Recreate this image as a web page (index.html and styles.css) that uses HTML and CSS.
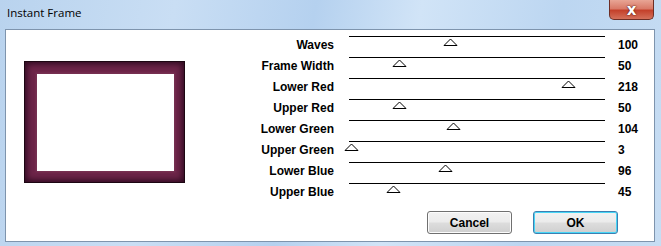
FILE: index.html
```html
<!DOCTYPE html>
<html lang="en">
<head>
  <meta charset="UTF-8" />
  <title>Instant Frame</title>
  <link rel="stylesheet" href="styles.css">
</head>
<body>
  <div class="window">
    <div class="titlebar">
      <span class="title">Instant Frame</span>
      <button class="close-btn" aria-label="Close">x</button>
    </div>
    <div class="client">
      <div class="main">
        <div class="preview-pane">
          <div class="frame-preview">
            <div class="frame-inner"></div>
          </div>
        </div>
        <div class="sliders">
          <div class="label">Waves</div>
          <div class="track"><svg class="thumb" style="left:101px" width="15" height="8" viewBox="0 0 15 8"><path d="M1 7.5 L7.5 1 L14 7.5 Z" fill="#fff" stroke="#000"/></svg></div>
          <div class="value">100</div>

          <div class="label">Frame Width</div>
          <div class="track"><svg class="thumb" style="left:50px" width="15" height="8" viewBox="0 0 15 8"><path d="M1 7.5 L7.5 1 L14 7.5 Z" fill="#fff" stroke="#000"/></svg></div>
          <div class="value">50</div>

          <div class="label">Lower Red</div>
          <div class="track"><svg class="thumb" style="left:219px" width="15" height="8" viewBox="0 0 15 8"><path d="M1 7.5 L7.5 1 L14 7.5 Z" fill="#fff" stroke="#000"/></svg></div>
          <div class="value">218</div>

          <div class="label">Upper Red</div>
          <div class="track"><svg class="thumb" style="left:50px" width="15" height="8" viewBox="0 0 15 8"><path d="M1 7.5 L7.5 1 L14 7.5 Z" fill="#fff" stroke="#000"/></svg></div>
          <div class="value">50</div>

          <div class="label">Lower Green</div>
          <div class="track"><svg class="thumb" style="left:104px" width="15" height="8" viewBox="0 0 15 8"><path d="M1 7.5 L7.5 1 L14 7.5 Z" fill="#fff" stroke="#000"/></svg></div>
          <div class="value">104</div>

          <div class="label">Upper Green</div>
          <div class="track"><svg class="thumb" style="left:2px" width="15" height="8" viewBox="0 0 15 8"><path d="M1 7.5 L7.5 1 L14 7.5 Z" fill="#fff" stroke="#000"/></svg></div>
          <div class="value">3</div>

          <div class="label">Lower Blue</div>
          <div class="track"><svg class="thumb" style="left:96px" width="15" height="8" viewBox="0 0 15 8"><path d="M1 7.5 L7.5 1 L14 7.5 Z" fill="#fff" stroke="#000"/></svg></div>
          <div class="value">96</div>

          <div class="label">Upper Blue</div>
          <div class="track"><svg class="thumb" style="left:44px" width="15" height="8" viewBox="0 0 15 8"><path d="M1 7.5 L7.5 1 L14 7.5 Z" fill="#fff" stroke="#000"/></svg></div>
          <div class="value">45</div>
        </div>
      </div>
      <div class="buttons">
        <button class="btn">Cancel</button>
        <button class="btn default">OK</button>
      </div>
    </div>
  </div>
</body>
</html>
```

FILE: styles.css
```css
html, body {
  margin: 0;
  padding: 0;
  width: 661px;
  height: 246px;
  overflow: hidden;
  font-family: "Liberation Sans", Arial, sans-serif;
}

.window {
  width: 661px;
  height: 246px;
  box-sizing: border-box;
  display: flex;
  flex-direction: column;
  background: linear-gradient(100deg, #b9d3ee 0%, #c9def4 25%, #b5d1ef 45%, #d1e4f7 60%, #bcd6f1 80%, #c7ddf3 100%);
  padding: 0 6px 4px 5px;
}

.titlebar {
  height: 29px;
  display: flex;
  align-items: flex-start;
  justify-content: space-between;
  flex-shrink: 0;
}

.title {
  font-family: "Open Sans", "Liberation Sans", sans-serif;
  font-size: 11.5px;
  color: #000;
  margin: 5px 0 0 2px;
}

.close-btn {
  width: 45px;
  height: 20px;
  margin-right: 1px;
  border: 1px solid #6e2e25;
  border-top: none;
  border-radius: 0 0 5px 5px;
  background: linear-gradient(#e8a595 0%, #d97a68 45%, #c4412b 55%, #d4705a 100%);
  color: #fff;
  font-family: "DejaVu Sans", sans-serif;
  font-weight: bold;
  font-size: 15px;
  line-height: 16px;
  padding: 0;
  text-shadow: 0 0 2px #5a1b12, 0 0 1px #5a1b12;
}

.client {
  flex-grow: 1;
  background: #fff;
  border: 1px solid #7e94ad;
  display: flex;
  flex-direction: column;
}

.main {
  display: flex;
}

.preview-pane {
  width: 208px;
  padding: 31px 0 0 18px;
  box-sizing: border-box;
}

.frame-preview {
  width: 161px;
  height: 122px;
  box-sizing: border-box;
  padding: 13px 11px 12px 13px;
  background: #6e2549;
  box-shadow: inset 0 0 0 1px #1c0612, inset 0 0 6px 3px #2e0a20;
}

.frame-inner {
  width: 100%;
  height: 100%;
  background: #fff;
  box-shadow: 0 0 2px 1px #7a3556;
}

.sliders {
  display: grid;
  grid-template-columns: 120px 256px auto;
  grid-auto-rows: 21px;
  column-gap: 15px;
  padding-top: 5px;
}

.label,
.value {
  font-weight: bold;
  font-size: 12px;
  color: #000;
  line-height: 14px;
  padding-top: 3px;
}

.label {
  text-align: right;
}

.value {
  margin-left: -2px;
}

.track {
  position: relative;
  border-top: 1px solid #000;
  margin-top: 1px;
}

.thumb {
  position: absolute;
  top: 1px;
  margin-left: -7px;
  display: block;
}

.buttons {
  display: flex;
  justify-content: flex-end;
  gap: 21px;
  padding: 8px 36px 0 0;
}

.btn {
  width: 85px;
  height: 23px;
  border: 1px solid #707070;
  border-radius: 3px;
  background: linear-gradient(#f2f2f2 0%, #ebebeb 48%, #dddddd 52%, #cfcfcf 100%);
  box-shadow: inset 0 0 0 1px #fcfcfc;
  font-family: "Liberation Sans", Arial, sans-serif;
  font-weight: bold;
  font-size: 12px;
  color: #000;
  padding: 0;
}

.btn.default {
  border-color: #3c7fb1;
  box-shadow: inset 0 0 0 1px #48d6f6;
}
```
